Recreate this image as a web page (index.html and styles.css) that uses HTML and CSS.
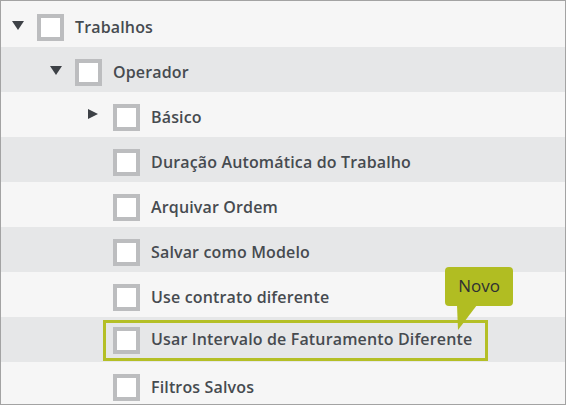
FILE: index.html
```html
<!DOCTYPE html>
<html lang="pt-br">
<head>
    <meta charset="UTF-8">
    <meta name="viewport" content="width=device-width, initial-scale=1.0">
    <title>Permissões</title>
    <link rel="stylesheet" href="styles.css">
</head>
<body>
    <div class="quadro">
        <ul class="arvore">
            <li class="linha clara primeira nivel-0">
                <span class="seta baixo"></span>
                <span class="caixa"></span>
                <span class="rotulo">Trabalhos</span>
            </li>
            <li class="linha escura nivel-1">
                <span class="seta baixo"></span>
                <span class="caixa"></span>
                <span class="rotulo">Operador</span>
            </li>
            <li class="linha clara nivel-2">
                <span class="seta direita"></span>
                <span class="caixa"></span>
                <span class="rotulo">Básico</span>
            </li>
            <li class="linha escura nivel-2">
                <span class="seta"></span>
                <span class="caixa"></span>
                <span class="rotulo">Duração Automática do Trabalho</span>
            </li>
            <li class="linha clara nivel-2">
                <span class="seta"></span>
                <span class="caixa"></span>
                <span class="rotulo">Arquivar Ordem</span>
            </li>
            <li class="linha escura nivel-2">
                <span class="seta"></span>
                <span class="caixa"></span>
                <span class="rotulo">Salvar como Modelo</span>
            </li>
            <li class="linha clara nivel-2">
                <span class="seta"></span>
                <span class="caixa"></span>
                <span class="rotulo">Use contrato diferente</span>
            </li>
            <li class="linha escura nivel-2">
                <span class="seta"></span>
                <div class="destaque">
                    <span class="caixa"></span>
                    <span class="rotulo">Usar Intervalo de Faturamento Diferente</span>
                    <div class="balao">
                        Novo
                        <svg class="ponta" width="22" height="26" viewBox="0 0 22 26">
                            <polygon points="2,0 20,0 1,25 0,0"/>
                        </svg>
                    </div>
                </div>
            </li>
            <li class="linha clara nivel-2">
                <span class="seta"></span>
                <span class="caixa"></span>
                <span class="rotulo">Filtros Salvos</span>
            </li>
        </ul>
    </div>
</body>
</html>
```

FILE: styles.css
```css
body {
    margin: 0;
    padding: 0;
    font-family: "Open Sans", "Liberation Sans", sans-serif;
    background-color: #ffffff;
}

.quadro {
    width: 566px;
    height: 405px;
    box-sizing: border-box;
    border: 1px solid #a3a3a3;
    overflow: hidden;
    background-color: #f6f6f6;
}

.arvore {
    list-style: none;
    margin: 0;
    padding: 0;
}

.linha {
    display: flex;
    align-items: center;
    height: 45px;
    box-sizing: border-box;
    padding-top: 6px;
    color: #464b50;
    font-size: 16px;
    font-weight: 600;
    letter-spacing: 0.15px;
}

.linha.primeira {
    height: 46px;
    padding-top: 7px;
}

.linha.clara {
    background-color: #f6f6f6;
}

.linha.escura {
    background-color: #e6e7e8;
}

.nivel-0 { padding-left: 11px; }
.nivel-1 { padding-left: 49px; }
.nivel-2 { padding-left: 87px; }

.seta {
    width: 25px;
    height: 12px;
    flex-shrink: 0;
    position: relative;
}

.seta.baixo::before {
    content: "";
    position: absolute;
    left: 0;
    top: -1px;
    border-left: 6px solid transparent;
    border-right: 6px solid transparent;
    border-top: 9px solid #3d4146;
}

.seta.direita::before {
    content: "";
    position: absolute;
    left: 0;
    top: -3px;
    border-top: 5.5px solid transparent;
    border-bottom: 5.5px solid transparent;
    border-left: 10px solid #3d4146;
}

.caixa {
    width: 27px;
    height: 27px;
    box-sizing: border-box;
    border: 4px solid #bcbdbf;
    background-color: #ffffff;
    flex-shrink: 0;
    margin-right: 11px;
}

.rotulo {
    white-space: nowrap;
    margin-top: -2px;
}

.destaque {
    position: relative;
    display: flex;
    align-items: center;
    height: 41px;
    box-sizing: border-box;
    margin-left: -10px;
    margin-top: -5px;
    padding: 0 13px 0 7px;
    border: 3px solid #b4bf26;
}

.balao {
    position: absolute;
    left: 339px;
    top: -56px;
    width: 68px;
    height: 39px;
    box-sizing: border-box;
    padding-top: 7px;
    border-radius: 4px;
    background-color: #b1bd22;
    color: #2e3033;
    font-size: 17px;
    font-weight: 400;
    letter-spacing: 0;
    text-align: center;
}

.ponta {
    position: absolute;
    left: 12px;
    top: 38px;
    fill: #b1bd22;
}
```
